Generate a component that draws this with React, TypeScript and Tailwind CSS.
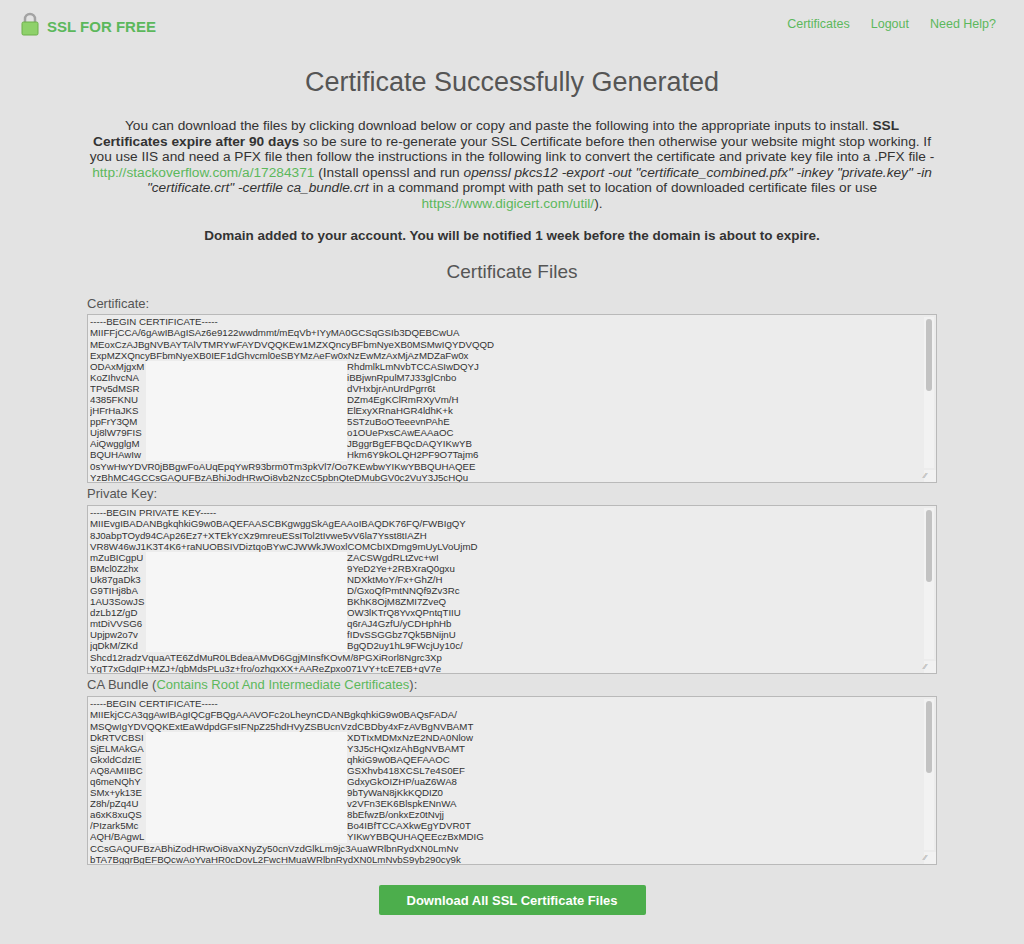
import React from "react";

type Line = string | [string, string];

const cert: Line[] = [
  "-----BEGIN CERTIFICATE-----",
  "MIIFFjCCA/6gAwIBAgISAz6e9122wwdmmt/mEqVb+IYyMA0GCSqGSIb3DQEBCwUA",
  "MEoxCzAJBgNVBAYTAlVTMRYwFAYDVQQKEw1MZXQncyBFbmNyeXB0MSMwIQYDVQQD",
  "ExpMZXQncyBFbmNyeXB0IEF1dGhvcml0eSBYMzAeFw0xNzEwMzAxMjAzMDZaFw0x",
  ["ODAxMjgxM", "RhdmlkLmNvbTCCASIwDQYJ"],
  ["KoZIhvcNA", "iBBjwnRpulM7J33glCnbo"],
  ["TPv5dMSR", "dVHxbjrAnUrdPgrr6t"],
  ["4385FKNU", "DZm4EgKClRmRXyVm/H"],
  ["jHFrHaJKS", "ElExyXRnaHGR4ldhK+k"],
  ["ppFrY3QM", "5STzuBoOTeeevnPAhE"],
  ["Uj8lW79FIS", "o1OUePxsCAwEAAaOC"],
  ["AiQwgglgM", "JBggrBgEFBQcDAQYIKwYB"],
  ["BQUHAwIw", "Hkm6Y9kOLQH2PF9O7Tajm6"],
  "0sYwHwYDVR0jBBgwFoAUqEpqYwR93brm0Tm3pkVl7/Oo7KEwbwYIKwYBBQUHAQEE",
  "YzBhMC4GCCsGAQUFBzABhiJodHRwOi8vb2NzcC5pbnQteDMubGV0c2VuY3J5cHQu",
];

const key: Line[] = [
  "-----BEGIN PRIVATE KEY-----",
  "MIIEvgIBADANBgkqhkiG9w0BAQEFAASCBKgwggSkAgEAAoIBAQDK76FQ/FWBIgQY",
  "8J0abpTOyd94CAp26Ez7+XTEkYcXz9mreuESsITol2tIvwe5vV6la7Ysst8tIAZH",
  "VR8W46wJ1K3T4K6+raNUOBSIVDiztqoBYwCJWWkJWoxlCOMCbIXDmg9mUyLVoUjmD",
  ["mZuBICgpU", "ZACSWgdRLtZvc+wI"],
  ["BMcl0Z2hx", "9YeD2Ye+2RBXraQ0gxu"],
  ["Uk87gaDk3", "NDXktMoY/Fx+GhZ/H"],
  ["G9TIHj8bA", "D/GxoQfPmtNNQf9Zv3Rc"],
  ["1AU3SowJS", "BKhK8OjM8ZMI7ZveQ"],
  ["dzLb1Z/gD", "OW3lKTrQ8YvxQPntqTIIU"],
  ["mtDiVVSG6", "q6rAJ4GzfU/yCDHphHb"],
  ["Upjpw2o7v", "fIDvSSGGbz7Qk5BNijnU"],
  ["jqDkM/ZKd", "BgQD2uy1hL9FWcjUy10c/"],
  "Shcd12radzVquaATE6ZdMuR0LBdeaAMvD6GgjMInsfKOvM/8PGXiRorl8Ngrc3Xp",
  "YgT7xGdqIP+MZJ+/qbMdsPLu3z+fro/ozhgxXX+AAReZpxo071VY+tcE7EB+qV7e",
];

const ca: Line[] = [
  "-----BEGIN CERTIFICATE-----",
  "MIIEkjCCA3qgAwIBAgIQCgFBQgAAAVOFc2oLheynCDANBgkqhkiG9w0BAQsFADA/",
  "MSQwIgYDVQQKExtEaWdpdGFsIFNpZ25hdHVyZSBUcnVzdCBDby4xFzAVBgNVBAMT",
  ["DkRTVCBSI", "XDTIxMDMxNzE2NDA0Nlow"],
  ["SjELMAkGA", "Y3J5cHQxIzAhBgNVBAMT"],
  ["GkxldCdzIE", "qhkiG9w0BAQEFAAOC"],
  ["AQ8AMIIBC", "GSXhvb418XCSL7e4S0EF"],
  ["q6meNQhY", "GdxyGkOIZHP/uaZ6WA8"],
  ["SMx+yk13E", "9bTyWaN8jKkKQDIZ0"],
  ["Z8h/pZq4U", "v2VFn3EK6BlspkENnWA"],
  ["a6xK8xuQS", "8bEfwzB/onkxEz0tNvjj"],
  ["/PIzark5Mc", "Bo4IBfTCCAXkwEgYDVR0T"],
  ["AQH/BAgwL", "YIKwYBBQUHAQEEczBxMDIG"],
  "CCsGAQUFBzABhiZodHRwOi8vaXNyZy50cnVzdGlkLm9jc3AuaWRlbnRydXN0LmNv",
  "bTA7BggrBgEFBQcwAoYvaHR0cDovL2FwcHMuaWRlbnRydXN0LmNvbS9yb290cy9k",
];

function CodeBox({ lines }: { lines: Line[] }) {
  return (
    <div className="relative h-[169px] overflow-hidden border border-[#b9b9b9] bg-[#ececec] pl-[2px] pt-[1px] text-[9.7px] leading-[11.1px] text-[#333]">
      {lines.map((l, i) =>
        typeof l === "string" ? (
          <div key={i} className="whitespace-nowrap">{l}</div>
        ) : (
          <div key={i} className="flex whitespace-nowrap">
            <span className="w-[56px] overflow-hidden">{l[0]}</span>
            <span className="w-[201px] bg-[#f6f6f6]" />
            <span>{l[1]}</span>
          </div>
        )
      )}
      <div className="absolute right-[2px] top-[2px] bottom-[14px] w-[10px] bg-[#f2f2f2]">
        <div className="mx-auto mt-[2px] h-[72px] w-[6px] rounded bg-[#c2c2c2]" />
      </div>
      <div className="absolute bottom-0 right-0 h-[12px] w-[12px] bg-[#f2f2f2] text-[8px] leading-[12px] text-[#999]">⁄⁄</div>
    </div>
  );
}

function Lock() {
  return (
    <svg width="18" height="24" viewBox="0 0 18 24">
      <path d="M4 11V7a5 5 0 0 1 10 0v4" fill="none" stroke="#a3a3a3" strokeWidth="2.5" />
      <rect x="1" y="10" width="16" height="13" rx="1.5" fill="#8ed16a" stroke="#6cb04a" />
    </svg>
  );
}

export default function App() {
  const font = { fontFamily: "'Liberation Sans', Arial, sans-serif" };
  return (
    <div style={font} className="min-h-[944px] w-[1024px] bg-[#e3e3e3] text-[#333]">
      <header className="flex h-[48px] items-center justify-between pl-[21px] pr-[28px]">
        <div className="flex items-end gap-[8px]">
          <Lock />
          <span className="text-[15px] font-bold leading-[18px] text-[#5cb85c]">SSL FOR FREE</span>
        </div>
        <nav className="flex gap-[21px] text-[12.5px] text-[#5cb85c]">
          <span>Certificates</span>
          <span>Logout</span>
          <span>Need Help?</span>
        </nav>
      </header>
      <main className="px-[87px]">
        <h1 className="mt-[17px] text-center text-[27px] leading-[34px] text-[#555]">
          Certificate Successfully Generated
        </h1>
        <p className="mt-[19px] text-center text-[13.7px] leading-[15.6px]">
          You can download the files by clicking download below or copy and paste the following into the appropriate inputs to install.{" "}
          <b>SSL Certificates expire after 90 days</b> so be sure to re-generate your SSL Certificate before then otherwise your website might stop working. If you use IIS and need a PFX file then follow the instructions in the following link to convert the certificate and private key file into a .PFX file -{" "}
          <span className="text-[#5cb85c]">http://stackoverflow.com/a/17284371</span> (Install openssl and run{" "}
          <i>openssl pkcs12 -export -out "certificate_combined.pfx" -inkey "private.key" -in "certificate.crt" -certfile ca_bundle.crt</i>{" "}
          in a command prompt with path set to location of downloaded certificate files or use{" "}
          <span className="text-[#5cb85c]">https://www.digicert.com/util/</span>).
        </p>
        <p className="mt-[14px] text-center text-[13.5px] font-bold">
          Domain added to your account. You will be notified 1 week before the domain is about to expire.
        </p>
        <h2 className="mt-[12px] text-center text-[19px] text-[#555]">Certificate Files</h2>
        <div className="mt-[10px] text-[13px] leading-[16px] text-[#555]">Certificate:</div>
        <div className="mt-[2px]"><CodeBox lines={cert} /></div>
        <div className="mt-[3px] text-[13px] leading-[16px] text-[#555]">Private Key:</div>
        <div className="mt-[3px]"><CodeBox lines={key} /></div>
        <div className="mt-[3px] text-[13px] leading-[16px] text-[#555]">
          CA Bundle (<span className="text-[#5cb85c]">Contains Root And Intermediate Certificates</span>):
        </div>
        <div className="mt-[3px]"><CodeBox lines={ca} /></div>
        <div className="mt-[20px] flex justify-center">
          <button className="h-[30px] w-[267px] rounded-[2px] bg-[#4cae4c] text-[13px] font-bold text-white">
            Download All SSL Certificate Files
          </button>
        </div>
      </main>
    </div>
  );
}
